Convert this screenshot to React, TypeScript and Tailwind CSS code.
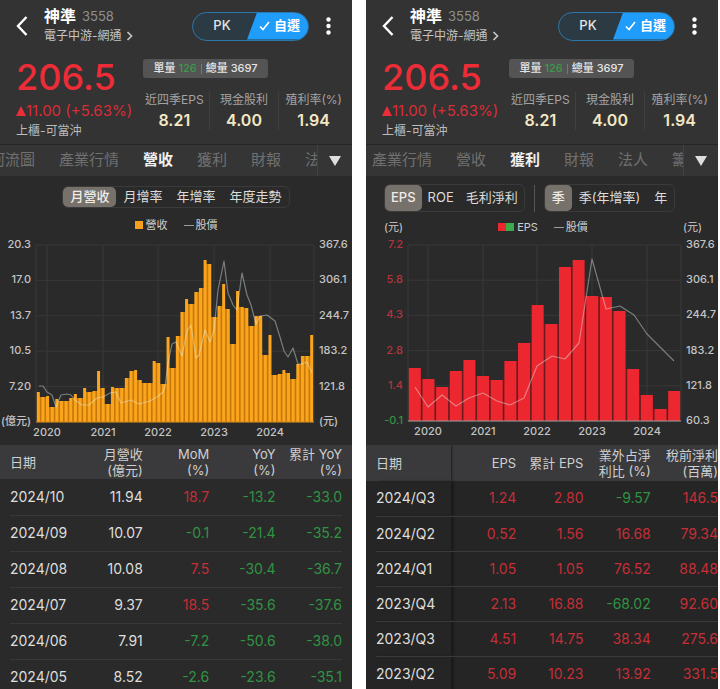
import { ReactNode } from "react";
import clsx from "clsx";

type Point = [number, number];

const REVENUE_BARS = [
   30, 25, 26, 15, 23, 21, 21, 24, 28, 24, 34, 30, 31, 51, 34, 18, 35, 34, 34, 44, 51, 52, 42, 39, 39, 61, 59, 38, 85, 54,
   86, 110, 123, 118, 130, 134, 162, 158, 105, 116, 138, 113, 78, 131, 115, 114, 96, 106, 106, 67, 87, 47, 48, 52, 49, 43, 58, 66, 66, 87,
];

const REVENUE_PRICE: Point[] = [
   [39, 150], [43, 150], [47, 156], [52, 159], [56, 171], [61, 159], [67, 158], [71, 159], [75, 164], [82, 169], [89, 169], [97, 162],
   [103, 161], [110, 157], [116, 156], [121, 167], [131, 164], [139, 168], [150, 165], [157, 161], [163, 156], [165, 151], [168, 127],
   [172, 108], [176, 106], [182, 120], [187, 95], [191, 89], [196, 122], [199, 119], [205, 94], [210, 106], [214, 94], [218, 54],
   [224, 25], [228, 57], [233, 69], [237, 74], [242, 37], [247, 59], [251, 69], [256, 88], [260, 80], [267, 79], [275, 85], [280, 101],
   [284, 115], [288, 121], [293, 112], [298, 128], [302, 128], [307, 126], [312, 137],
];

const EPS_BARS = [53, 42, 34, 50, 61, 45, 41, 60, 78, 116, 97, 154, 161, 125, 124, 110, 52, 26, 12, 30];

const EPS_PRICE: Point[] = [
   [49, 151], [62, 171], [76, 159], [90, 170], [103, 162], [117, 157], [131, 165], [144, 169], [158, 162], [171, 130], [186, 120], [199, 123],
   [213, 107], [226, 23], [240, 73], [254, 70], [268, 79], [281, 98], [295, 112], [308, 125],
];

const REVENUE_ROWS = [
   ["2024/10", "11.94", "18.7", "-13.2", "-33.0"],
   ["2024/09", "10.07", "-0.1", "-21.4", "-35.2"],
   ["2024/08", "10.08", "7.5", "-30.4", "-36.7"],
   ["2024/07", "9.37", "18.5", "-35.6", "-37.6"],
   ["2024/06", "7.91", "-7.2", "-50.6", "-38.0"],
   ["2024/05", "8.52", "-2.6", "-23.6", "-35.1"],
];

const EPS_ROWS = [
   ["2024/Q3", "1.24", "2.80", "-9.57", "146.5"],
   ["2024/Q2", "0.52", "1.56", "16.68", "79.34"],
   ["2024/Q1", "1.05", "1.05", "76.52", "88.48"],
   ["2023/Q4", "2.13", "16.88", "-68.02", "92.60"],
   ["2023/Q3", "4.51", "14.75", "38.34", "275.6"],
   ["2023/Q2", "5.09", "10.23", "13.92", "331.5"],
];

const tone = (value: string) => (value.startsWith("-") ? "text-[#309343]" : "text-[#c52e36]");

function Header() {
   return (
      <header className="flex h-[52px] items-center pl-4">
         <button aria-label="返回">
            <svg width="12" height="22" viewBox="0 0 12 22" fill="none" stroke="#fff" strokeWidth="2.4">
               <path d="M10.5 2 2 11l8.500 9" />
            </svg>
         </button>
         <div className="ml-4 flex-1">
            <h1 className="flex items-center gap-[6px] text-base/5 font-bold text-white">
               神準 <span className="text-[13px] font-normal text-[#8f8f8f]">3558</span>
            </h1>
            <button className="flex h-5 items-center gap-1 text-xs text-[#c4c4c4]">
               電子中游-網通
               <svg width="7" height="10" viewBox="0 0 7 10" fill="none" stroke="#c4c4c4" strokeWidth="1.700">
                  <path d="m1.500 1 4 4-4 4" />
               </svg>
            </button>
         </div>
         <div className="flex h-[29px] w-[117px] overflow-hidden rounded-full border border-[#2b78ac] bg-[#2c3a43]">
            <button className="w-[54px] pl-1 text-[13px] font-medium text-[#e4e4e4]">PK</button>
            <button className="flex flex-1 items-center justify-center gap-1 bg-[#209cfa] pl-1 text-[13px] font-bold text-white [clip-path:polygon(10px_0,100%_0,100%_100%,0_100%)]">
               <svg width="11" height="10" viewBox="0 0 11 10" fill="none" stroke="#fff" strokeWidth="1.600">
                  <path d="m1 5.500 3 3L10 1" />
               </svg>
               自選
            </button>
         </div>
         <button aria-label="更多" className="mr-5 ml-4">
            <svg width="7" height="18" viewBox="0 0 7 18" fill="#fff">
               <circle cx="3.500" cy="2.500" r="2.200" />
               <circle cx="3.500" cy="9" r="2.200" />
               <circle cx="3.500" cy="15.500" r="2.200" />
            </svg>
         </button>
      </header>
   );
}

function Stat({ label, value }: { label: string; value: string }) {
   return (
      <div className="h-[38px] border-l border-[#404040] text-center first:border-transparent">
         <dt className="text-xs/4 whitespace-nowrap text-[#a3a3a3]">{label}</dt>
         <dd className="mt-[2px] text-base/5 font-semibold text-[#f3e8c3]">{value}</dd>
      </div>
   );
}

function Summary() {
   return (
      <div className="flex h-[92px] pt-[7px] pl-4">
         <div className="w-[123px] whitespace-nowrap">
            <div className="text-4xl/9 font-medium text-[#ec2c37]">206.5</div>
            <div className="mt-[6px] flex items-center text-[15px]/5 text-[#d92d37]">
               <svg width="10" height="10" viewBox="0 0 10 10" fill="#ec2c37">
                  <path d="M5 0 10 10H0Z" />
               </svg>
               11.00 (+5.63%)
            </div>
            <div className="mt-[2px] text-xs/4 text-[#bcbcbc]">上櫃-可當沖</div>
         </div>
         <div className="flex-1 pr-1">
            <div className="ml-1 flex h-[19px] w-[125px] items-center justify-center gap-1 rounded-[3px] bg-[#545454] text-[11px] font-medium whitespace-nowrap text-[#e6e6e6]">
               <span>
                  單量 <span className="text-[#3c9a4b]">126</span>
               </span>
               <span className="h-[10px] w-px bg-[#777]" />
               <span>總量 3697</span>
            </div>
            <dl className="mt-[14px] grid grid-cols-3">
               <Stat label="近四季EPS" value="8.21" />
               <Stat label="現金股利" value="4.00" />
               <Stat label="殖利率(%)" value="1.94" />
            </dl>
         </div>
      </div>
   );
}

function Tabs({ items, active, className }: { items: string[]; active: string; className: string }) {
   return (
      <nav className="flex h-8 border-t border-[#262626] bg-[#353535]">
         <div className="flex-1 overflow-hidden border-r border-[#424242]">
            <div className={clsx("flex h-full w-max gap-6 text-[15px]", className)}>
               {items.map((item) => (
                  <button key={item} className={item === active ? "font-bold text-[#f0f0f0]" : "text-[#707070]"}>
                     {item}
                  </button>
               ))}
            </div>
         </div>
         <button aria-label="展開" className="flex w-[34px] items-center justify-center">
            <svg width="12" height="10" viewBox="0 0 12 10" fill="#dedede">
               <path d="M0 0h12L6 10Z" />
            </svg>
         </button>
      </nav>
   );
}

function Segmented({ items, className, itemClass }: { items: string[]; className: string; itemClass: string }) {
   return (
      <div className={clsx("flex rounded-md border border-[#3a3a3a] text-[13px] whitespace-nowrap text-[#dcdcdc]", className)}>
         {items.map((item, i) => (
            <button key={item} className={clsx("rounded-[5px]", itemClass, i === 0 && "bg-[#77716b] font-medium text-[#efece8]")}>
               {item}
            </button>
         ))}
      </div>
   );
}

function Legend({ label, children }: { label: string; children: ReactNode }) {
   return (
      <div className="flex items-center justify-center text-[11px]/4 text-[#cfcfcf]">
         {children}
         <span className="ml-[3px]">{label}</span>
         <span className="mr-[2px] ml-4 h-px w-[10px] bg-[#9c9c9c]" />
         股價
      </div>
   );
}

type ChartProps = {
   title: string;
   left: number;
   right: number;
   base: number;
   bars: number[];
   barWidth: number;
   barColor: string;
   gapColor: string;
   price: Point[];
   years: number[];
   leftLabels: string[];
   rightLabels: string[];
   leftClass: string;
   axisColor: string;
};

function Chart(props: ChartProps) {
   const { title, left, right, base, bars, barWidth, barColor, gapColor, price, years, leftLabels, rightLabels, leftClass, axisColor } = props;
   const pitch = (right - left) / bars.length;
   const step = (base - 9) / 5;

   return (
      <svg viewBox="0 0 352 209" className="block w-full text-[11px] font-medium" role="img" aria-label={title}>
         <g stroke="#383838">
            {leftLabels.map((_, i) => (
               <line key={i} x1={left} x2={right} y1={9 + i * step} y2={9 + i * step} />
            ))}
            {[left, ...years, right].map((x) => (
               <line key={x} x1={x} x2={x} y1={9} y2={base} />
            ))}
         </g>
         {/* gaps are shaded up to the shorter of the two neighbouring bars */}
         {bars.slice(1).map((h, i) => {
            const gap = Math.min(h, bars[i]);
            return <rect key={i} x={left + (i + 0.5) * pitch} y={base - gap} width={pitch} height={gap} fill={gapColor} />;
         })}
         {bars.map((h, i) => (
            <rect key={i} x={left + i * pitch + (pitch - barWidth) / 2} y={base - h} width={barWidth} height={h} fill={barColor} />
         ))}
         <line x1={left} x2={right} y1={base} y2={base} stroke={axisColor} />
         <polyline points={price.map((p) => p.join(",")).join(" ")} fill="none" stroke="#e2f2ee" strokeOpacity="0.42" strokeWidth="1.200" strokeLinejoin="round" />
         {leftLabels.map((label, i) => (
            <text key={label} x={left - 5} y={12 + i * step} textAnchor="end" className={label.startsWith("-") ? "fill-[#309343]" : leftClass}>
               {label}
            </text>
         ))}
         {rightLabels.map((label, i) => (
            <text key={label} x={right + 5} y={12 + i * step} className="fill-[#c4c4c4]">
               {label}
            </text>
         ))}
         {years.map((x, i) => (
            <text key={x} x={x} y={base + 14} textAnchor="middle" className="fill-[#c4c4c4]">
               {2020 + i}
            </text>
         ))}
      </svg>
   );
}

function RevenuePanel() {
   return (
      <section className="overflow-hidden bg-[#2a2a2a]">
         <div className="bg-[#333]">
            <Header />
            <Summary />
         </div>
         <Tabs items={["河流圖", "產業行情", "營收", "獲利", "財報", "法人"]} active="營收" className="-ml-[10px]" />
         <div className="flex h-[60px] flex-col items-center pt-[10px]">
            <Segmented items={["月營收", "月增率", "年增率", "年度走勢"]} className="h-[22px]" itemClass="px-[7px]" />
            <div className="mt-[9px]">
               <Legend label="營收">
                  <span className="size-2 bg-[#f8a01c]" />
               </Legend>
            </div>
         </div>
         <Chart
            title="營收與股價"
            left={36}
            right={314}
            base={186}
            bars={REVENUE_BARS}
            barWidth={3}
            barColor="#fba51f"
            gapColor="#c67808"
            price={REVENUE_PRICE}
            years={[47, 103, 158, 214, 270]}
            leftLabels={["20.3", "17.0", "13.7", "10.5", "7.20", "(億元)"]}
            rightLabels={["367.6", "306.1", "244.7", "183.2", "121.8", "(元)"]}
            leftClass="fill-[#c4c4c4]"
            axisColor="#d98c17"
         />
         <div className="px-[10px]">
            <table className="w-full table-fixed text-right text-sm">
               <thead className="text-[13px]/4 text-[#cfcfcf]">
                  <tr className="h-[34px] bg-[#3a3a3c] shadow-[-10px_0_#3a3a3c,10px_0_#3a3a3c]">
                     <th className="w-[21%] text-left font-normal">日期</th>
                     <th className="w-[19%] font-normal">月營收<br />(億元)</th>
                     <th className="font-normal">MoM<br />(%)</th>
                     <th className="font-normal">YoY<br />(%)</th>
                     <th className="font-normal whitespace-nowrap">累計 YoY<br />(%)</th>
                  </tr>
               </thead>
               <tbody>
                  {REVENUE_ROWS.map(([date, revenue, ...rates]) => (
                     <tr key={date} className="h-9 border-b border-[#383838] text-[#dedede]">
                        <td className="text-left">{date}</td>
                        <td>{revenue}</td>
                        {rates.map((rate, i) => (
                           <td key={i} className={tone(rate)}>{rate}</td>
                        ))}
                     </tr>
                  ))}
               </tbody>
            </table>
         </div>
      </section>
   );
}

function ProfitPanel() {
   return (
      <section className="overflow-hidden bg-[#2a2a2a]">
         <div className="bg-[#333]">
            <Header />
            <Summary />
         </div>
         <Tabs items={["產業行情", "營收", "獲利", "財報", "法人", "籌碼"]} active="獲利" className="ml-[6px]" />
         <div className="h-[60px] pt-2">
            <div className="flex items-center pl-[18px]">
               <Segmented items={["EPS", "ROE", "毛利淨利"]} className="h-7" itemClass="px-[6px]" />
               <span className="mx-[9px] h-[27px] w-px bg-[#555]" />
               <Segmented items={["季", "季(年增率)", "年"]} className="h-7" itemClass="px-[7px]" />
            </div>
            <div className="mt-[7px] flex justify-between pr-4 pl-[18px] text-[11px]/4 text-[#cfcfcf]">
               <span>(元)</span>
               <Legend label="EPS">
                  <span className="size-2 bg-[#ed2730]" />
                  <span className="size-2 bg-[#3cab4a]" />
               </Legend>
               <span>(元)</span>
            </div>
         </div>
         <Chart
            title="EPS與股價"
            left={42}
            right={315}
            base={185}
            bars={EPS_BARS}
            barWidth={12}
            barColor="#ed2730"
            gapColor="#6b1a1e"
            price={EPS_PRICE}
            years={[62, 117, 171, 226, 281]}
            leftLabels={["7.2", "5.8", "4.3", "2.8", "1.4", "-0.1"]}
            rightLabels={["367.6", "306.1", "244.7", "183.2", "121.8", "60.3"]}
            leftClass="fill-[#b5343b]"
            axisColor="#a09a9a"
         />
         <div className="bg-[#252525] pl-[10px]">
            <table className="w-full table-fixed text-right text-sm">
               <thead className="text-[13px]/4 text-[#cfcfcf]">
                  <tr className="h-9 bg-[#3a3a3c] shadow-[-10px_0_#3a3a3c]">
                     <th className="w-[22%] text-left font-normal shadow-[2px_0_2px_-1px_#1c1c1c]">日期</th>
                     <th className="w-[19%] font-normal">EPS</th>
                     <th className="font-normal whitespace-nowrap">累計 EPS</th>
                     <th className="font-normal whitespace-nowrap">業外占淨<br />利比 (%)</th>
                     <th className="font-normal whitespace-nowrap">稅前淨利<br />(百萬)</th>
                  </tr>
               </thead>
               <tbody>
                  {EPS_ROWS.map(([quarter, ...values]) => (
                     <tr key={quarter} className="h-[35px] border-b border-[#3a3a3a]">
                        <td className="text-left text-[#dedede] shadow-[3px_0_3px_-1px_#161616]">{quarter}</td>
                        {values.map((value, i) => (
                           <td key={i} className={tone(value)}>{value}</td>
                        ))}
                     </tr>
                  ))}
               </tbody>
            </table>
         </div>
      </section>
   );
}

export default function App() {
   return (
      <main className="grid h-screen grid-cols-2 gap-[14px] overflow-hidden bg-white pr-[2px] font-['Inter','Noto_Sans_CJK_TC',sans-serif]">
         <RevenuePanel />
         <ProfitPanel />
      </main>
   );
}
